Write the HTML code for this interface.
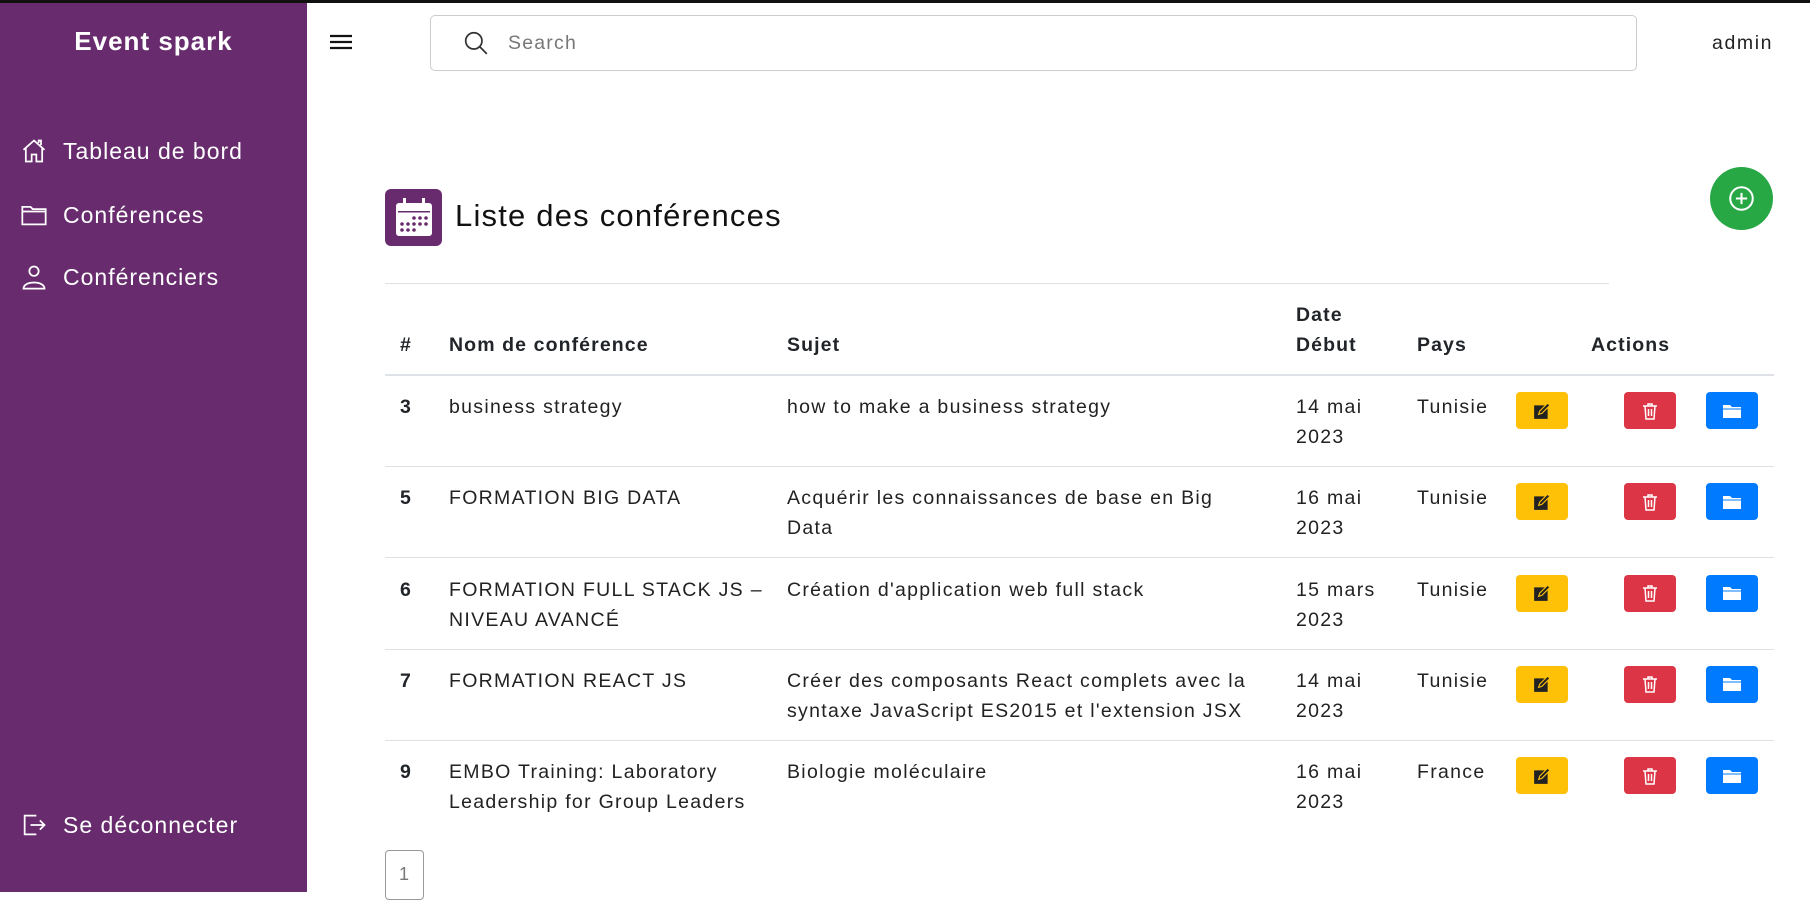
<!DOCTYPE html>
<html><head><meta charset="utf-8"><style>
*{box-sizing:border-box;margin:0;padding:0}
body{width:1810px;height:892px;overflow:hidden;background:#fff;font-family:"Liberation Sans",sans-serif;color:#212529;position:relative}
.abs{position:absolute}
#top{left:0;top:0;width:1810px;height:3px;background:#111}
#side{left:0;top:3px;width:307px;height:889px;background:#682c6e;color:#fff}
.nav{position:absolute;left:20px;display:flex;align-items:center;font-size:23px;letter-spacing:1px;color:#fff;white-space:nowrap}
.nav svg{margin-right:15px}
.t{position:absolute;font-size:19.5px;letter-spacing:1.3px;line-height:30px;color:#222;white-space:nowrap}
.h{position:absolute;font-size:19.5px;letter-spacing:1.1px;font-weight:bold;line-height:30px;color:#212529;white-space:nowrap}
.line{position:absolute;height:1px;background:#dee2e6}
.btn{position:absolute;width:52px;height:37px;border-radius:4px;display:flex;align-items:center;justify-content:center}
</style></head><body>
<div class="abs" id="top"></div>
<div class="abs" id="side">
 <div class="abs" style="left:0;width:307px;top:23px;text-align:center;font-size:26px;letter-spacing:1px;font-weight:bold">Event spark</div>
 <div class="nav" style="top:134px"><svg width="28" height="28" viewBox="0 0 24 24" fill="none" stroke="#fff" stroke-width="1.5"><path d="M3 11 L12 3 L21 11 M5 9.5 V21 H10 V15 H14 V21 H19 V9.5 M16 5 V3 H18 V7"/></svg>Tableau de bord</div>
 <div class="nav" style="top:198px"><svg width="28" height="28" viewBox="0 0 24 24" fill="none" stroke="#fff" stroke-width="1.5"><path d="M2 5 H9 L11 7 H22 V20 H2 Z M2 9 H22"/></svg>Conférences</div>
 <div class="nav" style="top:260px"><svg width="28" height="28" viewBox="0 0 24 24" fill="none" stroke="#fff" stroke-width="1.5"><circle cx="12" cy="7" r="4"/><path d="M3 22 C3 15 21 15 21 22 Z"/></svg>Conférenciers</div>
 <div class="nav" style="top:808px"><svg width="28" height="28" viewBox="0 0 24 24" fill="none" stroke="#fff" stroke-width="1.5"><path d="M14 4 H4 V20 H14 M9 12 H21 M17 8 L21 12 L17 16"/></svg>Se déconnecter</div>
</div>
<svg class="abs" style="left:329px;top:32px" width="24" height="20" viewBox="0 0 24 20"><path d="M1 4H23M1 10H23M1 16H23" stroke="#111" stroke-width="2.2"/></svg>
<div class="abs" style="left:430px;top:15px;width:1207px;height:56px;border:1px solid #ccc;border-radius:5px"></div>
<svg class="abs" style="left:463px;top:30px" width="26" height="26" viewBox="0 0 24 24" fill="none" stroke="#333" stroke-width="1.6"><circle cx="10" cy="10" r="7.5"/><path d="M15.5 15.5 L22 22"/></svg>
<div class="abs" style="left:508px;top:32px;font-size:19.5px;letter-spacing:1.2px;color:#777">Search</div>
<div class="abs" style="left:1712px;top:32px;font-size:19.5px;letter-spacing:1.6px;color:#222">admin</div>

<div class="abs" style="left:385px;top:189px;width:57px;height:57px;background:#682c6e;border-radius:6px"></div>
<svg class="abs" style="left:394px;top:196px" width="40" height="42" viewBox="0 0 40 42"><rect x="2" y="7" width="36" height="33" rx="3" fill="#fff"/><rect x="4" y="15" width="32" height="1.5" fill="#682c6e"/><rect x="9" y="2" width="3" height="8" fill="#fff"/><rect x="28" y="2" width="3" height="8" fill="#fff"/><g fill="#682c6e"><circle cx="20" cy="22" r="1.8"/><circle cx="26" cy="22" r="1.8"/><circle cx="32" cy="22" r="1.8"/><circle cx="8" cy="28" r="1.8"/><circle cx="14" cy="28" r="1.8"/><circle cx="20" cy="28" r="1.8"/><circle cx="26" cy="28" r="1.8"/><circle cx="32" cy="28" r="1.8"/><circle cx="8" cy="34" r="1.8"/><circle cx="14" cy="34" r="1.8"/><circle cx="20" cy="34" r="1.8"/></g></svg>
<div class="abs" style="left:455px;top:198px;font-size:31px;letter-spacing:1.2px;color:#111">Liste des conférences</div>
<div class="abs" style="left:1710px;top:167px;width:63px;height:63px;border-radius:50%;background:#28a745"></div>
<svg class="abs" style="left:1728px;top:185px" width="27" height="27" viewBox="0 0 24 24" fill="none" stroke="#fff" stroke-width="1.8"><circle cx="12" cy="12" r="10"/><path d="M12 7V17M7 12H17"/></svg>
<div class="line" style="left:385px;top:283px;width:1224px"></div>

<div class="h" style="left:400px;top:330px">#</div>
<div class="h" style="left:449px;top:330px">Nom de conférence</div>
<div class="h" style="left:787px;top:330px">Sujet</div>
<div class="h" style="left:1296px;top:300px">Date<br>Début</div>
<div class="h" style="left:1417px;top:330px">Pays</div>
<div class="h" style="left:1591px;top:330px">Actions</div>
<div class="line" style="left:385px;top:374px;width:1389px;height:2px"></div>

<div id="rows"></div>
<script>
var d=[["3","business strategy","how to make a business strategy","14 mai<br>2023","Tunisie"],
["5","FORMATION BIG DATA","Acquérir les connaissances de base en Big<br>Data","16 mai<br>2023","Tunisie"],
["6","FORMATION FULL STACK JS –<br>NIVEAU AVANCÉ","Création d'application web full stack","15 mars<br>2023","Tunisie"],
["7","FORMATION REACT JS","Créer des composants React complets avec la<br>syntaxe JavaScript ES2015 et l'extension JSX","14 mai<br>2023","Tunisie"],
["9","EMBO Training: Laboratory<br>Leadership for Group Leaders","Biologie moléculaire","16 mai<br>2023","France"]];
var h="";
var edit='<svg width="18" height="18" viewBox="0 0 16 16"><rect x="1" y="3" width="12" height="12" fill="#222"/><path d="M5 11 L6 8 L13 1 L15 3 L8 10 Z" fill="#222" stroke="#ffc107" stroke-width="1"/></svg>';
var trash='<svg width="16" height="18" viewBox="0 0 16 18" fill="none" stroke="#fff" stroke-width="1.5"><path d="M1 4H15M6 4V2H10V4M3 4L4 17H12L13 4M6.5 7V14M9.5 7V14"/></svg>';
var fold='<svg width="20" height="16" viewBox="0 0 20 16"><path d="M1 2H8L10 4H19V15H1Z" fill="#fff"/><path d="M1 6H19" stroke="#007bff" stroke-width="1"/></svg>';
for(var i=0;i<5;i++){var y=375+i*91.3,ty=y+17;
h+='<div class="h" style="left:400px;top:'+ty+'px">'+d[i][0]+'</div>';
h+='<div class="t" style="left:449px;top:'+ty+'px">'+d[i][1]+'</div>';
h+='<div class="t" style="left:787px;top:'+ty+'px">'+d[i][2]+'</div>';
h+='<div class="t" style="left:1296px;top:'+ty+'px">'+d[i][3]+'</div>';
h+='<div class="t" style="left:1417px;top:'+ty+'px">'+d[i][4]+'</div>';
h+='<div class="btn" style="left:1516px;top:'+(y+17)+'px;background:#ffc107">'+edit+'</div>';
h+='<div class="btn" style="left:1624px;top:'+(y+17)+'px;background:#dc3545">'+trash+'</div>';
h+='<div class="btn" style="left:1706px;top:'+(y+17)+'px;background:#007bff">'+fold+'</div>';
if(i<4)h+='<div class="line" style="left:385px;top:'+(y+91)+'px;width:1389px"></div>';}
document.getElementById("rows").innerHTML=h;
</script>
<div class="abs" style="left:385px;top:850px;width:39px;height:50px;border:1px solid #999;border-radius:4px;font-size:18px;color:#777;padding:13px 0 0 13px">1</div>
</body></html>
